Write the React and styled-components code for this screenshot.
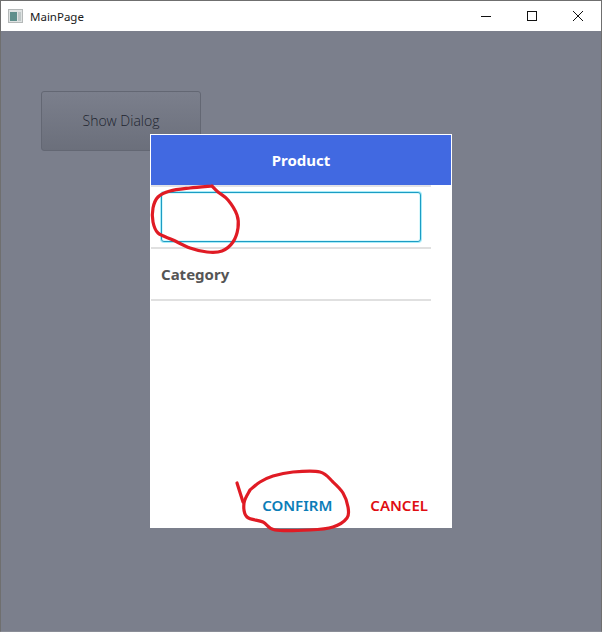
import styled, { createGlobalStyle } from 'styled-components'

const GlobalStyle = createGlobalStyle`
  html, body {
    margin: 0;
    padding: 0;
    background: #7b7f8c;
  }
`

const Window = styled.div`
  position: relative;
  width: 602px;
  height: 632px;
  box-sizing: border-box;
  border: 1px solid #6f6f6f;
  border-bottom-color: #8a8d97;
  display: flex;
  flex-direction: column;
  overflow: hidden;
`

const TitleBar = styled.div`
  height: 30px;
  flex-shrink: 0;
  background: #fff;
  display: flex;
  align-items: center;
  padding-left: 7px;
  font-family: "Noto Sans", "Liberation Sans", sans-serif;
  font-size: 11.5px;
  color: #1a1a1a;
`

const TitleIcon = styled.svg`
  width: 15px;
  height: 14px;
  margin-right: 7px;
`

const TitleText = styled.span`
  flex: 1;
`

const WinButton = styled.div`
  width: 46px;
  height: 30px;
  display: flex;
  align-items: center;
  justify-content: center;
`

const Content = styled.div`
  flex: 1;
  background: #7b7f8c;
  padding: 60px 0 0 40px;
`

const ShowButton = styled.div`
  width: 160px;
  height: 60px;
  box-sizing: border-box;
  border: 1px solid #636773;
  border-radius: 3px;
  background: linear-gradient(#7b7f8c, #6b6f7b);
  display: flex;
  align-items: center;
  justify-content: center;
  padding-bottom: 2px;
  font-family: "Open Sans", "Liberation Sans", sans-serif;
  font-size: 14px;
  font-weight: 300;
  color: #20242f;
`

const Dialog = styled.div`
  position: absolute;
  left: 149px;
  top: 133px;
  width: 302px;
  height: 394px;
  box-sizing: border-box;
  border: 1px solid #fff;
  background: #fff;
  display: flex;
  flex-direction: column;
  font-family: "Noto Sans", "Liberation Sans", sans-serif;
`

const Header = styled.div`
  height: 50px;
  flex-shrink: 0;
  background: #4169e1;
  color: #fff;
  font-size: 15px;
  font-weight: 700;
  display: flex;
  align-items: center;
  justify-content: center;
`

const Row = styled.div`
  width: 280px;
  height: ${p => p.$height}px;
  box-sizing: border-box;
  border-top: ${p => (p.$top ? '2px solid #e2e2e6' : 'none')};
  border-bottom: 2px solid #e0e0e0;
  display: flex;
  align-items: center;
  padding: 0 10px;
`

const Input = styled.div`
  flex: 1;
  height: 50px;
  box-sizing: border-box;
  border: 1px solid #1c9cc4;
  border-radius: 3px;
  box-shadow: 0 0 0 1px #a8ecf8, inset 0 0 0 1px #d8f8fc;
  background: #fff;
`

const Label = styled.span`
  font-size: 15px;
  font-weight: 700;
  color: #555;
`

const Footer = styled.div`
  margin-top: auto;
  height: 44px;
  display: flex;
  align-items: center;
  justify-content: flex-end;
  gap: 38px;
  padding-right: 23px;
`

const Action = styled.span`
  font-size: 15px;
  font-weight: 600;
  color: ${p => p.$color};
`

const Scribble = styled.svg`
  position: absolute;
  left: -1px;
  top: -1px;
  width: 602px;
  height: 632px;
  pointer-events: none;
`

const Mark = styled.path`
  fill: none;
  stroke: #e01b24;
  stroke-width: 3.2;
  stroke-linecap: round;
  stroke-linejoin: round;
`

// rounds a hand drawn line through its points
const smooth = pts => {
  let d = `M${pts[0][0]} ${pts[0][1]}`
  for (let i = 0; i < pts.length - 1; i++) {
    const a = pts[i - 1] || pts[i]
    const b = pts[i]
    const c = pts[i + 1]
    const e = pts[i + 2] || c
    d += `C${b[0] + (c[0] - a[0]) / 6} ${b[1] + (c[1] - a[1]) / 6} ${c[0] - (e[0] - b[0]) / 6} ${c[1] - (e[1] - b[1]) / 6} ${c[0]} ${c[1]}`
  }
  return d
}

const inputMark = [[212, 186], [190, 188], [170, 191], [158, 197], [153, 208], [153, 222], [158, 233], [173, 240], [190, 248], [207, 252], [222, 251], [233, 242], [238, 228], [237, 215], [228, 200], [218, 192], [212, 186]]
const confirmMark = [[250, 490], [260, 482], [273, 476], [293, 472], [320, 472], [333, 482], [343, 493], [348, 507], [347, 518], [333, 527], [310, 530], [275, 530], [263, 522], [247, 517], [244, 503], [250, 490]]

export default function App() {
  return (
    <Window>
      <GlobalStyle />
      <TitleBar>
        <TitleIcon viewBox="0 0 15 14">
          <rect x="0.5" y="0.5" width="14" height="13" fill="#dfe3e3" stroke="#b4b8b8" />
          <rect x="2" y="3" width="7" height="9" fill="#5f8f8c" />
          <rect x="10" y="3" width="3" height="9" fill="#c0c8c8" />
        </TitleIcon>
        <TitleText>MainPage</TitleText>
        <WinButton>
          <svg width="10" height="10" viewBox="0 0 10 10">
            <path d="M0 5.5h10" stroke="#111" />
          </svg>
        </WinButton>
        <WinButton>
          <svg width="10" height="10" viewBox="0 0 10 10">
            <rect x="0.5" y="0.5" width="9" height="9" fill="none" stroke="#111" />
          </svg>
        </WinButton>
        <WinButton>
          <svg width="10" height="10" viewBox="0 0 10 10">
            <path d="M0 0l10 10M10 0L0 10" stroke="#111" />
          </svg>
        </WinButton>
      </TitleBar>
      <Content>
        <ShowButton>Show Dialog</ShowButton>
      </Content>
      <Dialog>
        <Header>Product</Header>
        <Row $height={64} $top>
          <Input />
        </Row>
        <Row $height={52}>
          <Label>Category</Label>
        </Row>
        <Footer>
          <Action $color="#0b7db8">CONFIRM</Action>
          <Action $color="#e00d12">CANCEL</Action>
        </Footer>
      </Dialog>
      <Scribble viewBox="0 0 602 632">
        <Mark d={smooth(inputMark)} />
        <Mark d={smooth(confirmMark)} />
        <Mark d="M237 483L243 502" />
      </Scribble>
    </Window>
  )
}
